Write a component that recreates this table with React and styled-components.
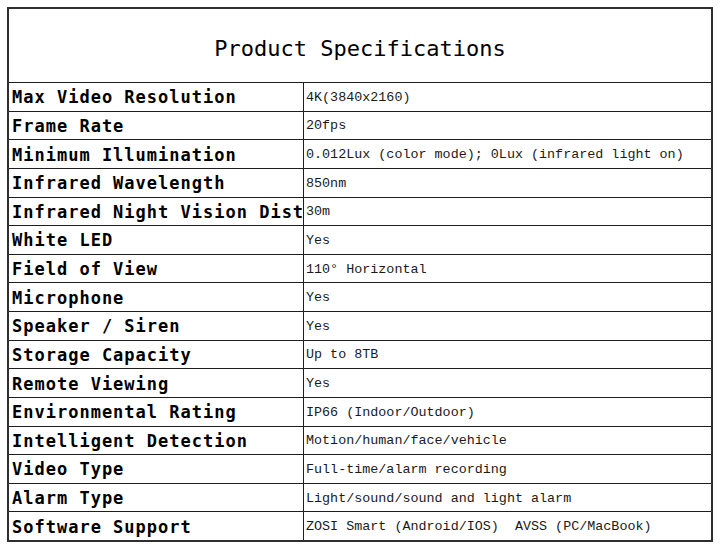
import React from 'react';
import styled, { createGlobalStyle } from 'styled-components';

const GlobalStyle = createGlobalStyle`
  html, body {
    margin: 0;
    padding: 0;
    background: #ffffff;
  }
`;

const Page = styled.div`
  padding: 7px 0 0 7px;
`;

const SpecTable = styled.div`
  display: grid;
  grid-template-columns: 294px 407px;
  grid-template-rows: 73px repeat(16, 27.625px);
  gap: 1px;
  width: 702px;
  border: 2px solid #2f2f2f;
  background: #1e1e1e;
`;

const Title = styled.div`
  grid-column: 1 / span 2;
  display: flex;
  align-items: center;
  justify-content: center;
  background: #fff;
  font-family: "DejaVu Sans Mono", monospace;
  font-size: 22px;
  color: #000;
  padding-top: 6px;
`;

const Label = styled.div`
  display: flex;
  align-items: center;
  background: #fff;
  padding: 1px 0 0 3px;
  overflow: hidden;
  white-space: nowrap;
  font-family: "DejaVu Sans Mono", monospace;
  font-weight: bold;
  font-size: 17px;
  letter-spacing: 1px;
  color: #000;
`;

const Value = styled.div`
  display: flex;
  align-items: center;
  background: #fff;
  padding: 1px 0 0 2px;
  overflow: hidden;
  white-space: pre;
  font-family: "Liberation Mono", monospace;
  font-size: 13.4px;
  color: #1a1a1a;
`;

const specs = [
  ['Max Video Resolution', '4K(3840x2160)'],
  ['Frame Rate', '20fps'],
  ['Minimum Illumination', '0.012Lux (color mode); 0Lux (infrared light on)'],
  ['Infrared Wavelength', '850nm'],
  ['Infrared Night Vision Dist', '30m'],
  ['White LED', 'Yes'],
  ['Field of View', '110° Horizontal'],
  ['Microphone', 'Yes'],
  ['Speaker / Siren', 'Yes'],
  ['Storage Capacity', 'Up to 8TB'],
  ['Remote Viewing', 'Yes'],
  ['Environmental Rating', 'IP66 (Indoor/Outdoor)'],
  ['Intelligent Detection', 'Motion/human/face/vehicle'],
  ['Video Type', 'Full-time/alarm recording'],
  ['Alarm Type', 'Light/sound/sound and light alarm'],
  ['Software Support', 'ZOSI Smart (Android/IOS)  AVSS (PC/MacBook)'],
];

export default function App() {
  return (
    <Page>
      <GlobalStyle />
      <SpecTable>
        <Title>Product Specifications</Title>
        {specs.map(([label, value]) => (
          <React.Fragment key={label}>
            <Label>{label}</Label>
            <Value>{value}</Value>
          </React.Fragment>
        ))}
      </SpecTable>
    </Page>
  );
}
